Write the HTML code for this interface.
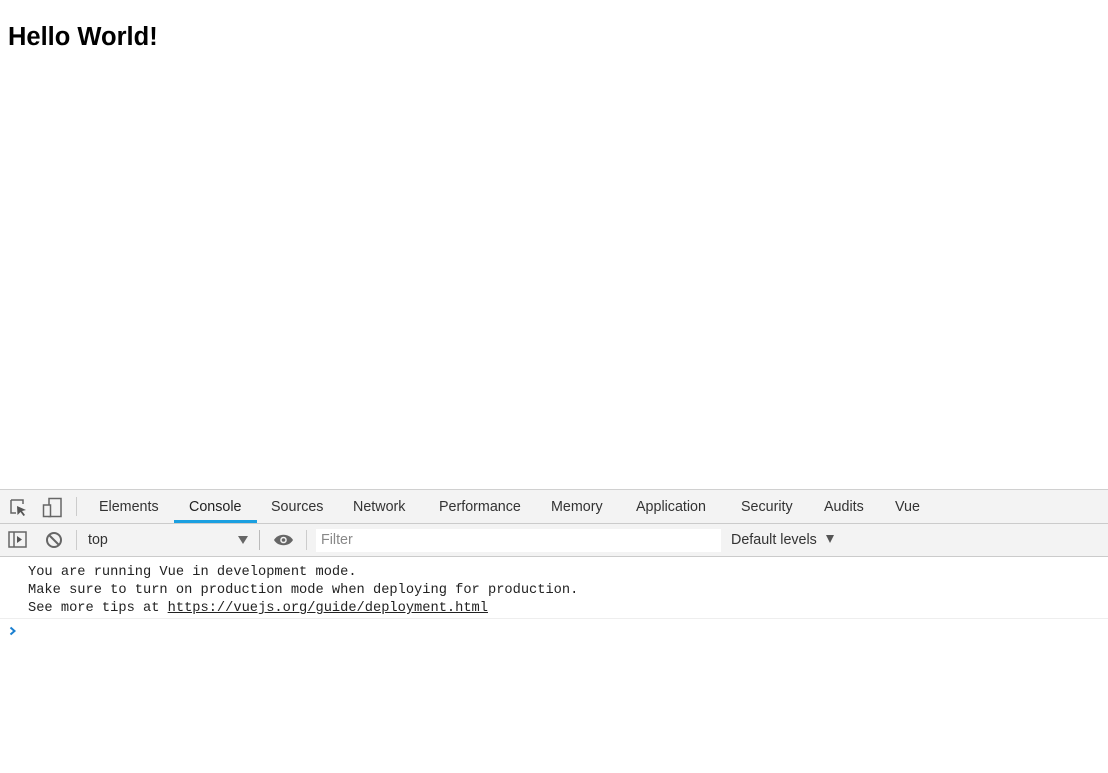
<!DOCTYPE html>
<html><head><style>
body{margin:0;width:1108px;height:773px;position:relative;background:#fff;font-family:"Liberation Sans",sans-serif;overflow:hidden}
h1{position:absolute;left:8px;top:21px;margin:0;font-size:25.5px;font-weight:bold;color:#000;line-height:32px}
.bar1{position:absolute;left:0;top:489px;width:1108px;height:33px;background:#f3f3f3;border-top:1px solid #d0d0d0;border-bottom:1px solid #cbcbcb}
.bar2{position:absolute;left:0;top:524px;width:1108px;height:32px;background:#f3f3f3;border-bottom:1px solid #cbcbcb}
.tab{position:absolute;top:1px;height:33px;line-height:33px;font-size:14.3px;color:#333}
.sel{position:absolute;left:174px;top:30px;width:83px;height:3px;background:#1a9fe0}
.sep{position:absolute;width:1px;background:#ccc}
.mono{font-family:"Liberation Mono",monospace;font-size:13.7px;color:#222;position:absolute;left:28px;line-height:18px;white-space:pre}
</style></head><body>
<h1>Hello World!</h1>
<div class="bar1">
<svg style="position:absolute;left:9px;top:8px" width="20" height="20" viewBox="0 0 20 20"><path d="M2 2h12v4M2 2v13h5" fill="none" stroke="#666" stroke-width="1.5"/><path d="M8 8l9 4-4 1 3 4-1.5 1-3-4-3 3z" fill="#555"/></svg>
<svg style="position:absolute;left:42px;top:7px" width="22" height="22" viewBox="0 0 22 22"><rect x="7" y="1.5" width="12" height="18" fill="none" stroke="#666" stroke-width="1.5"/><rect x="1.5" y="8" width="7" height="11.5" fill="#f3f3f3" stroke="#666" stroke-width="1.5"/></svg>
<div class="sep" style="left:76px;top:7px;height:19px"></div>
<div class="tab" style="left:99px">Elements</div>
<div class="tab" style="left:189px;color:#222">Console</div>
<div class="tab" style="left:271px">Sources</div>
<div class="tab" style="left:353px">Network</div>
<div class="tab" style="left:439px">Performance</div>
<div class="tab" style="left:551px">Memory</div>
<div class="tab" style="left:636px">Application</div>
<div class="tab" style="left:741px">Security</div>
<div class="tab" style="left:824px">Audits</div>
<div class="tab" style="left:895px">Vue</div>
<div class="sel"></div>
</div>
<div class="bar2">
<svg style="position:absolute;left:8px;top:7px" width="20" height="18" viewBox="0 0 20 18"><rect x="1" y="1" width="17" height="15" fill="none" stroke="#666" stroke-width="1.5"/><line x1="6" y1="1" x2="6" y2="16" stroke="#666" stroke-width="1.5"/><path d="M9 5l5 3.5-5 3.5z" fill="#555"/></svg>
<svg style="position:absolute;left:45px;top:7px" width="18" height="18" viewBox="0 0 18 18"><circle cx="9" cy="9" r="7" fill="none" stroke="#666" stroke-width="2"/><line x1="4" y1="4" x2="14" y2="14" stroke="#666" stroke-width="2"/></svg>
<div class="sep" style="left:76px;top:6px;height:20px"></div>
<div class="tab" style="left:88px;top:0">top</div>
<div style="position:absolute;left:238px;top:12px;width:0;height:0;border-left:5px solid transparent;border-right:5px solid transparent;border-top:8px solid #666"></div>
<div class="sep" style="left:259px;top:6px;height:20px;background:#bbb"></div>
<svg style="position:absolute;left:273px;top:9px" width="21" height="14" viewBox="0 0 21 14"><path d="M1 7C5 0 16 0 20 7 16 14 5 14 1 7z" fill="#666"/><circle cx="10.5" cy="7" r="3.3" fill="#f3f3f3"/><circle cx="10.5" cy="7" r="1.8" fill="#666"/></svg>
<div class="sep" style="left:306px;top:6px;height:20px"></div>
<div style="position:absolute;left:316px;top:5px;width:405px;height:23px;background:#fff"></div>
<div class="tab" style="left:321px;top:0;color:#888">Filter</div>
<div class="tab" style="left:731px;top:0">Default levels</div>
<div style="position:absolute;left:826px;top:11px;width:0;height:0;border-left:4.5px solid transparent;border-right:4.5px solid transparent;border-top:8px solid #555"></div>
</div>
<div class="mono" style="top:564px">You are running Vue in development mode.</div>
<div class="mono" style="top:582px">Make sure to turn on production mode when deploying for production.</div>
<div class="mono" style="top:600px">See more tips at <u>https://vuejs.org/guide/deployment.html</u></div>
<div style="position:absolute;left:0;top:618px;width:1108px;height:1px;background:#eee"></div>
<svg style="position:absolute;left:9px;top:626px" width="8" height="10" viewBox="0 0 8 10"><path d="M1.5 1.5l4 3.5-4 3.5" fill="none" stroke="#1a7fd0" stroke-width="2"/></svg>
</body></html>
